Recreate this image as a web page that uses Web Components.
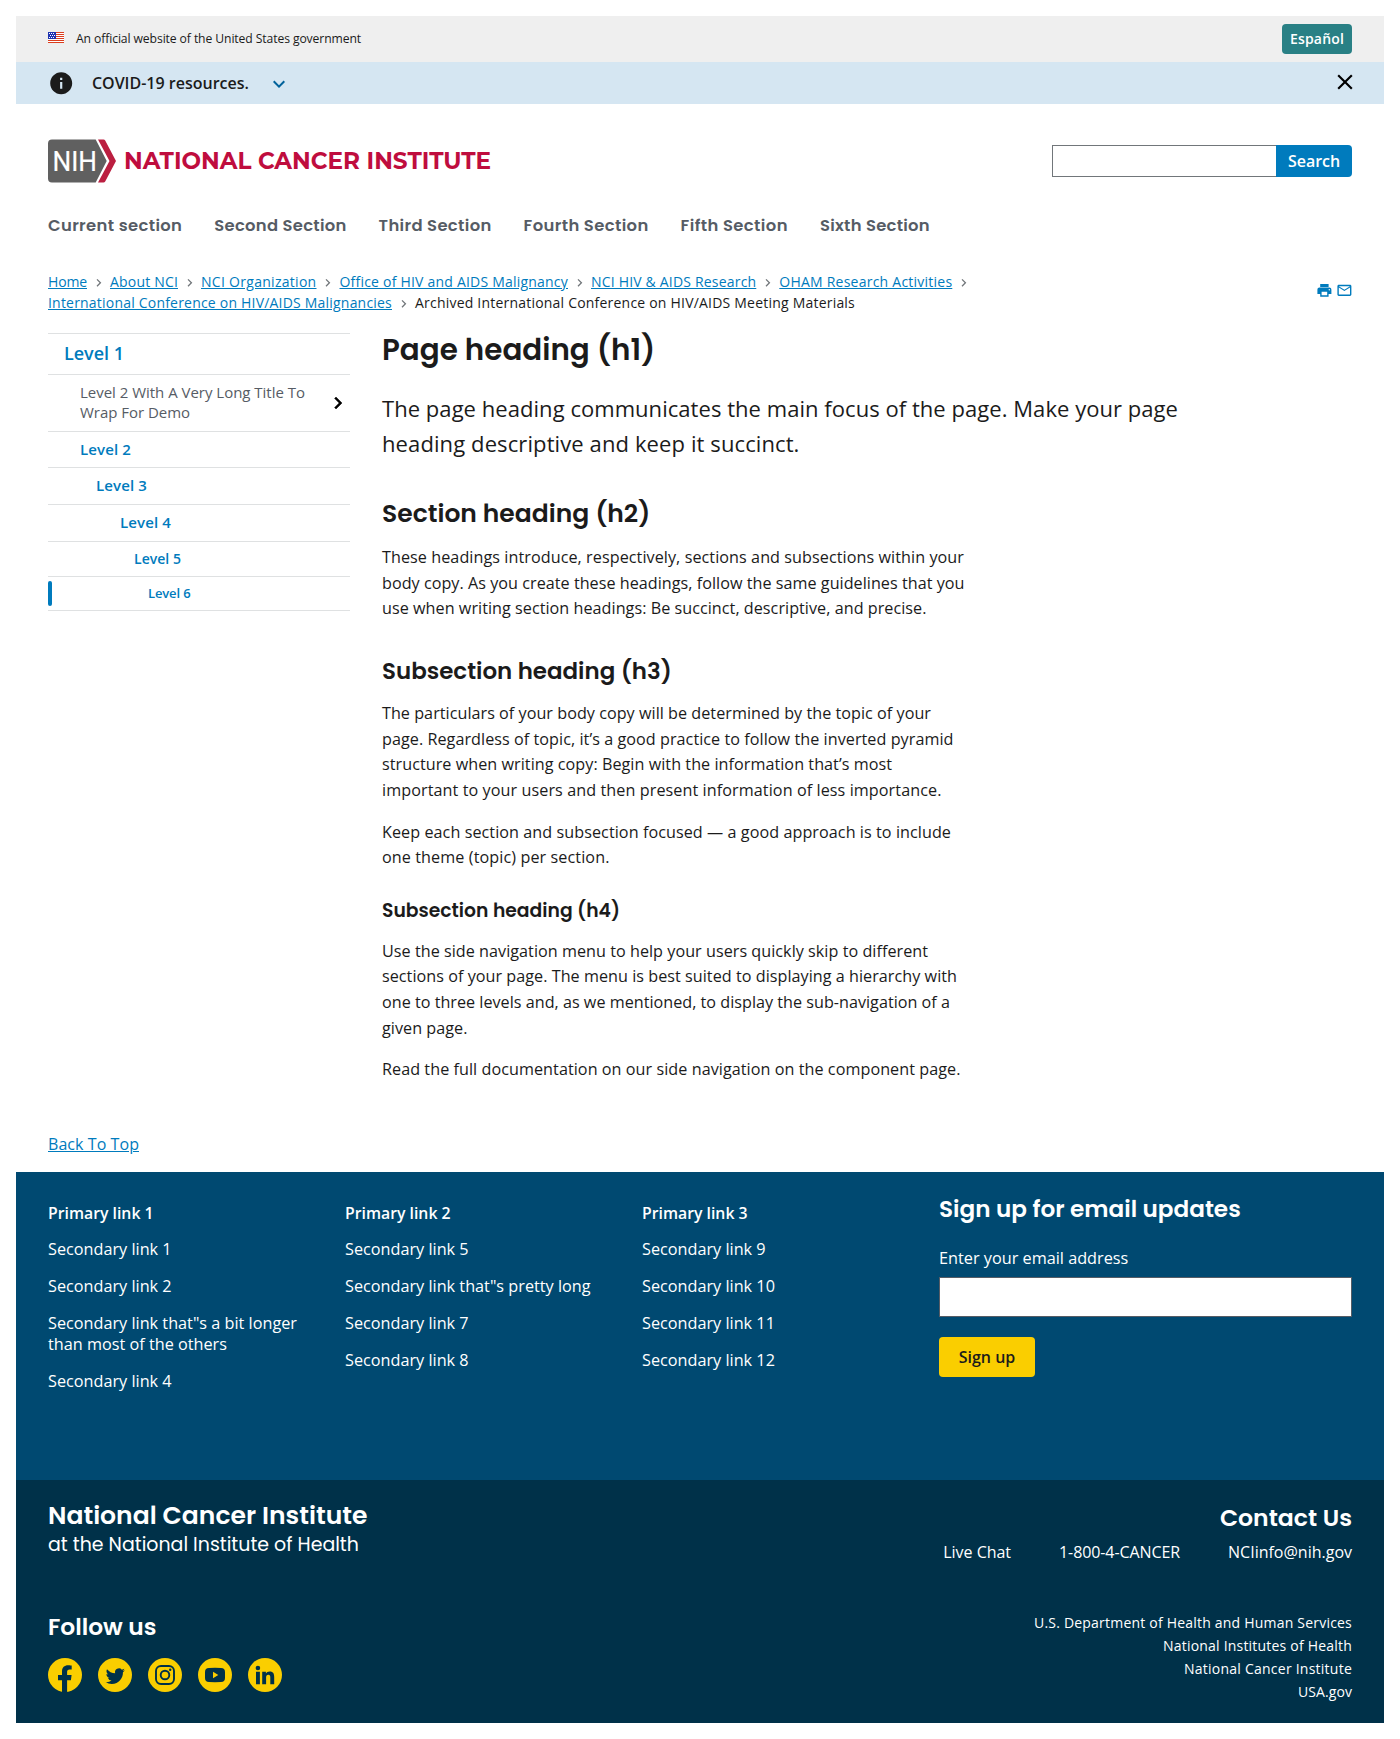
<!DOCTYPE html>
<html lang="en">
<head>
<meta charset="utf-8">
<title>National Cancer Institute</title>
<style>
body{margin:0;padding:16px;background:#fff;color:#1b1b1b;font:16px "Open Sans",sans-serif;
--head:Poppins,Inter,"Open Sans",sans-serif;--link:#007bbd;--line:#dfe1e2;--accent:#face00}
</style>
</head>
<body>
<nci-banner></nci-banner>
<nci-alert>COVID-19 resources.</nci-alert>
<nci-header></nci-header>
<nci-breadcrumb></nci-breadcrumb>
<nci-layout>
  <nci-sidenav slot="side"></nci-sidenav>
  <nci-article></nci-article>
</nci-layout>
<nci-footer></nci-footer>
<script>
const BASE = `*{box-sizing:border-box}a{color:inherit;text-decoration:none}svg{display:block;fill:currentColor;flex:none}
h1,h2,h3,h4,p,ul{margin:0;padding:0}ul{list-style:none}
h1,h2,h3,h4,.head{font-family:var(--head);font-weight:600;white-space:nowrap}
[data-w]{display:inline-block;white-space:nowrap}[data-s]{width:max-content}`;

// data-s: scale the type to a line width; data-w: distribute letter spacing to a line width.
function fit(root){
  root.querySelectorAll('[data-s]').forEach(el => {
    const size = parseFloat(getComputedStyle(el).fontSize);
    const now = el.getBoundingClientRect().width;
    if (now) el.style.fontSize = (size * el.dataset.s / now).toFixed(3) + 'px';
  });
  root.querySelectorAll('[data-w]').forEach(el => {
    const n = el.textContent.length;
    const now = el.getBoundingClientRect().width;
    if (now) el.style.letterSpacing = ((+el.dataset.w - now) / n).toFixed(4) + 'px';
  });
}
function define(name, css, html){
  const t = document.createElement('template');
  t.innerHTML = `<style>${BASE}:host{display:block}${css}</style>${html}`;
  customElements.define(name, class extends HTMLElement{
    constructor(){ super(); this.attachShadow({mode:'open'}).append(t.content.cloneNode(true)); }
    connectedCallback(){ fit(this.shadowRoot); }
  });
}

const ICONS = {
  info:'M12 2C6.48 2 2 6.48 2 12s4.48 10 10 10 10-4.48 10-10S17.52 2 12 2zm1 15h-2v-6h2v6zm0-8h-2V7h2v2z',
  more:'M16.59 8.59 12 13.17 7.41 8.59 6 10l6 6 6-6z',
  close:'M19 6.41 17.59 5 12 10.59 6.41 5 5 6.41 10.59 12 5 17.59 6.41 19 12 13.41 17.59 19 19 17.59 13.41 12z',
  next:'M10 6 8.59 7.41 13.17 12l-4.58 4.59L10 18l6-6z',
  print:'M19 8H5c-1.66 0-3 1.34-3 3v6h4v4h12v-4h4v-6c0-1.66-1.34-3-3-3zm-3 11H8v-5h8v5zm3-7c-.55 0-1-.45-1-1s.45-1 1-1 1 .45 1 1-.45 1-1 1zm-1-9H6v4h12V3z',
  mail:'M22 6c0-1.1-.9-2-2-2H4c-1.1 0-2 .9-2 2v12c0 1.1.9 2 2 2h16c1.1 0 2-.9 2-2V6zm-2 0l-8 5-8-5h16zm0 12H4V8l8 5 8-5v10z'
};
const icon = (n, s) => `<svg class="${n}" width="${s}" height="${s}" viewBox="0 0 24 24"><path d="${ICONS[n]}"/></svg>`;

define('nci-banner', `
:host{height:46px;background:#efefef;padding:0 32px}
.row{display:flex;align-items:center;height:100%}
.flag{margin:0 12px 3px 0}
.t{font-size:12.16px;line-height:16px;flex:none}
.es{margin:0 0 0 auto;width:70px;height:30px;border-radius:4px;background:#298085;color:#fff;font-weight:600;font-size:14px;line-height:30px;text-align:center}`,
`<div class="row"><svg class="flag" width="16" height="11" viewBox="0 0 16 11" shape-rendering="crispEdges">
<path fill="#fff" d="M0 0h16v11H0z"/><path fill="#db3e1f" d="M0 0h16v1H0zM0 2h16v1H0zM0 4h16v1H0zM0 6h16v1H0zM0 8h16v1H0zM0 10h16v1H0z"/><path fill="#1e33b1" d="M0 0h8v7H0z"/>
<path fill="#fff" d="M1 1h1v1H1zM3 1h1v1H3zM5 1h1v1H5zM2 3h1v1H2zM4 3h1v1H4zM6 3h1v1H6zM1 5h1v1H1zM3 5h1v1H3zM5 5h1v1H5z"/></svg>
<span class="t" data-w="285">An official website of the United States government</span>
<a class="es"><span data-w="54">Español</span></a></div>`);

define('nci-alert', `
:host{height:42px;background:#d5e6f2;padding:0 32px}
.row{display:flex;align-items:center;height:100%}
.t{font-weight:600;line-height:22px;margin-left:17.500px}
.more{color:#00629b;margin-left:18.500px;margin-top:1px}
.close{margin:-1.500px -6px 0 auto;color:#000}`,
`<div class="row">${icon('info',26.4)}<span class="t"><slot></slot></span>${icon('more',24)}${icon('close',26)}</div>`);

define('nci-header', `
:host{padding:35px 32px 0}
.top{display:flex;justify-content:space-between;align-items:center;height:44px}
.search{display:flex;height:32px}
.box{width:224px;border:1px solid #71767a;border-right:0;background:#fff}
.btn{width:76px;background:var(--link);color:#fff;font-weight:600;line-height:32px;text-align:center;border-radius:0 4px 4px 0}
nav{display:flex;gap:32px;margin-top:30px;color:#565c65;font-size:16.400px;line-height:24px;height:24px}
nav a{padding-top:.500px}`,
`<div class="top"><svg width="460" height="44" viewBox="0 0 460 44">
<path fill="#606060" d="M4 .5H47.7L58.7 22 47.7 43.5H4A4 4 0 0 1 0 39.500V4.500A4 4 0 0 1 4 .5z"/>
<path fill="#bb1f40" d="M50 .5H55.500Q56.600 .5 57.200 1.500L68 22 57.200 42.500Q56.600 43.500 55.500 43.500H50L61.500 22z"/>
<text x="4.500" y="31.500" font-family="Roboto,sans-serif" font-size="27" font-weight="400" fill="#fff" stroke="#fff" stroke-width=".2" textLength="44.500" lengthAdjust="spacingAndGlyphs">NIH</text>
<text x="76" y="30" font-family="Montserrat,Inter,sans-serif" font-size="23.700" font-weight="700" fill="#bf0d3e" textLength="367" lengthAdjust="spacingAndGlyphs">NATIONAL CANCER INSTITUTE</text></svg>
<div class="search"><div class="box"></div><div class="btn"><span data-w="52">Search</span></div></div></div>
<nav class="head"><a data-w="134.300">Current section</a><a data-w="132.300">Second Section</a><a data-w="113">Third Section</a><a data-w="125">Fourth Section</a><a data-w="107.300">Fifth Section</a><a data-w="110">Sixth Section</a></nav>`);

const crumbs = [['Home',39],['About NCI',68],['NCI Organization',115.500],['Office of HIV and AIDS Malignancy',228.500],['NCI HIV &amp; AIDS Research',165.300],['OHAM Research Activities',173],['International Conference on HIV/AIDS Malignancies',344]];
define('nci-breadcrumb', `
:host{padding:34px 32px 0}
.row{display:flex;justify-content:space-between}
ul{display:flex;flex-wrap:wrap;width:1200px;font-size:14px;line-height:21px}
li{display:flex;align-items:center}
a{color:var(--link);text-decoration:underline}
.next{color:#71767a;margin:2px 4px 0 3.500px}
.tools{display:flex;gap:3.200px;color:var(--link);padding:10.500px 0 0;margin-right:-1px}`,
`<div class="row"><ul>${crumbs.map(c=>`<li><a data-w="${c[1]}">${c[0]}</a>${icon('next',15.500)}</li>`).join('')}<li><span data-w="440">Archived International Conference on HIV/AIDS Meeting Materials</span></li></ul>
<div class="tools">${icon('print',16.800)}${icon('mail',16.800)}</div></div>`);

define('nci-layout', `
:host{padding:20px 32px 0;height:802px}
.row{display:flex;gap:32px}
::slotted([slot=side]){flex:none;width:302px}
main{flex:1}`,
`<div class="row"><slot name="side"></slot><main><slot></slot></main></div>`);

define('nci-sidenav', `
ul{border-bottom:1px solid var(--line)}
li{border-top:1px solid var(--line);display:flex;align-items:center;color:var(--link);font-weight:600;line-height:20px}
a{padding-bottom:2px}
.l1{height:41px;padding-left:16px;font-size:18px}
.wrap{height:57px;padding-left:32px;font-size:15px;font-weight:400;color:#565c65;justify-content:space-between}
.wrap a{padding:0}.wrap span{padding-bottom:2px}
.wrap .next{color:#000;stroke:#000;stroke-width:.5}
.l2{height:36px;padding-left:32px;font-size:15px}
.l3{height:37px;padding-left:48px;font-size:15px}
.l4{height:37px;padding-left:72px;font-size:15px}
.l5{height:35px;padding-left:86px;font-size:14px}
.l5 a{padding-bottom:0}
.l6{height:34px;font-size:13px}
.l6::before{content:"";width:4px;height:25px;border-radius:2px;background:var(--link);margin-right:96px}`,
`<ul><li class="l1"><a data-w="60">Level 1</a></li>
<li class="wrap"><span><a data-w="225">Level 2 With A Very Long Title To</a><br><a data-w="110">Wrap For Demo</a></span>${icon('next',24)}</li>
<li class="l2"><a data-w="51">Level 2</a></li><li class="l3"><a data-w="51">Level 3</a></li><li class="l4"><a data-w="51">Level 4</a></li><li class="l5"><a data-w="47">Level 5</a></li><li class="l6"><a data-w="42.500">Level 6</a></li></ul>`);

const lines = a => a.map(([w,t]) => `<span data-w="${w}">${t}</span>`).join(' <br>');
define('nci-article', `
h1{font-size:29.500px;line-height:33px}
.lead{font-size:22px;line-height:35px;margin-top:25px}
h2{font-size:24px;line-height:30px;margin-top:38px}
h3{font-size:21.500px;line-height:28px;margin-top:34.500px}
h4{font-size:18.400px;line-height:24px;margin-top:27.500px}
p{font-size:16.160px;line-height:25.700px;margin-top:16px}
h3+p{margin-top:16.300px}
p span{vertical-align:top}`,
`<h1 data-s="273.500">Page heading (h1)</h1>
<p class="lead">${lines([[796,'The page heading communicates the main focus of the page. Make your page'],[417.500,'heading descriptive and keep it succinct.']])}</p>
<h2 data-s="268.500">Section heading (h2)</h2>
<p>${lines([[582,'These headings introduce, respectively, sections and subsections within your'],[582.500,'body copy. As you create these headings, follow the same guidelines that you'],[544.500,'use when writing section headings: Be succinct, descriptive, and precise.']])}</p>
<h3 data-s="290">Subsection heading (h3)</h3>
<p>${lines([[549,'The particulars of your body copy will be determined by the topic of your'],[571.500,'page. Regardless of topic, it’s a good practice to follow the inverted pyramid'],[510,'structure when writing copy: Begin with the information that’s most'],[559.500,'important to your users and then present information of less importance.']])}</p>
<p>${lines([[569,'Keep each section and subsection focused — a good approach is to include'],[227.500,'one theme (topic) per section.']])}</p>
<h4 data-s="238">Subsection heading (h4)</h4>
<p>${lines([[546,'Use the side navigation menu to help your users quickly skip to different'],[575,'sections of your page. The menu is best suited to displaying a hierarchy with'],[568,'one to three levels and, as we mentioned, to display the sub-navigation of a'],[85.500,'given page.']])}</p>
<p>${lines([[578.500,'Read the full documentation on our side navigation on the component page.']])}</p>`);

const cols = [['Primary link 1','Secondary link 1','Secondary link 2','Secondary link that"s a bit longer than most of the others','Secondary link 4'],
['Primary link 2','Secondary link 5','Secondary link that"s pretty long','Secondary link 7','Secondary link 8'],
['Primary link 3','Secondary link 9','Secondary link 10','Secondary link 11','Secondary link 12']];
const SOCIAL = [
 '<path d="M14 34.500V22.300H10V17H14V13.600C14 9.500 16.400 7.300 20.100 7.300c1.800 0 3.600.3 3.600.3v4h-2c-2 0-2.600 1.200-2.600 2.500V17h4.500l-.7 5.300h-3.800V34.500z"/>',
 '<path transform="translate(7.700 8.600) scale(.8)" d="M23.953 4.570a10 10 0 01-2.825.775 4.958 4.958 0 002.163-2.723c-.951.555-2.005.959-3.127 1.184a4.920 4.920 0 00-8.384 4.482C7.690 8.095 4.067 6.130 1.640 3.162a4.822 4.822 0 00-.666 2.475c0 1.710.870 3.213 2.188 4.096a4.904 4.904 0 01-2.228-.616v.060a4.923 4.923 0 003.946 4.827 4.996 4.996 0 01-2.212.085 4.936 4.936 0 004.604 3.417 9.867 9.867 0 01-6.102 2.105c-.390 0-.779-.023-1.170-.067a13.995 13.995 0 007.557 2.209c9.053 0 13.998-7.496 13.998-13.985 0-.210 0-.420-.015-.630A9.935 9.935 0 0024 4.590z"/>',
 '<g fill="none" stroke="currentColor" stroke-width="1.900"><rect x="8" y="8" width="18" height="18" rx="5"/><circle cx="17" cy="17" r="4.300"/></g><circle cx="22.200" cy="11.800" r="1.200"/>',
 '<path fill-rule="evenodd" d="M11 10Q17 9.700 23 10Q27 10.200 27 14V20Q27 23.800 23 24Q17 24.300 11 24Q7 23.800 7 20V14Q7 10.200 11 10zM15 13.700V20.300L20.300 17z"/>',
 '<circle cx="9.900" cy="10" r="2.300"/><path d="M8 13.700h3.900V26.300H8zM14.200 13.700h3.700v1.700c.7-1.200 2-2 3.800-2 3.700 0 4.500 2.300 4.500 5.700v7.200h-3.900v-6.500c0-1.600-.1-3-2-3s-2.200 1.400-2.200 3v6.500h-3.900z"/>'];
define('nci-footer', `
:host{color:#fff}
.back{height:49px;width:1304px;margin:-12px 0 0 32px;padding-top:10px;line-height:22px}
.back a{color:var(--link);text-decoration:underline}
.links{height:308px;background:#004971;padding:0 32px;display:grid;grid-template-columns:265px 265px 265px 413px;column-gap:32px}
ul.col{display:flex;flex-direction:column;gap:16px;padding-top:31px;font-size:16.240px;line-height:21px}
.col li:first-child{font-size:15.800px;font-weight:600;line-height:20px;margin-bottom:-.5px}
.sign{padding-top:23px}
.sign h3{font-size:21.700px;line-height:28px}
label{display:block;font-size:16.260px;line-height:21px;margin-top:25px}
.in{height:40px;border:1px solid #565c65;background:#fff;margin-top:8px}
.go{width:96px;height:40px;margin-top:20px;border-radius:4px;background:var(--accent);color:#1b1b1b;font-weight:600;line-height:40px;text-align:center}
.dark{height:243px;background:#003149;padding:0 32px;display:flex;justify-content:space-between}
.l{padding-top:22px}
.l .t{font-size:23.500px;line-height:28px}
.l .s{font-size:19.600px;line-height:26px;font-weight:400;margin-top:2px}
.l h3,.r h3{font-size:21.700px;line-height:28px}
.l h3{margin-top:55px}
.soc{display:flex;gap:16px;margin-top:17px;color:#003149}
.r{padding-top:24px;display:flex;flex-direction:column;align-items:flex-end;text-align:right}
.c{display:flex;gap:48px;justify-content:flex-end;line-height:21px;margin-top:10px}
.ag{font-size:14px;line-height:23px;margin-top:48px}`,
`<div class="back"><a data-w="91">Back To Top</a></div>
<div class="links">${cols.map(c=>`<ul class="col">${c.map(x=>`<li><a>${x}</a></li>`).join('')}</ul>`).join('')}
<div class="sign"><h3 data-s="301.700">Sign up for email updates</h3><label>Enter your email address</label><div class="in"></div><div class="go">Sign up</div></div></div>
<div class="dark"><div class="l"><div class="t head" data-s="319.500">National Cancer Institute</div><div class="s head" data-s="311">at the National Institute of Health</div>
<h3 data-s="108.500">Follow us</h3>
<div class="soc">${SOCIAL.map(s=>`<svg width="34" height="34" viewBox="0 0 34 34"><circle cx="17" cy="17" r="17" fill="#face00"/>${s}</svg>`).join('')}</div></div>
<div class="r"><h3 data-s="132">Contact Us</h3><div class="c"><a data-w="67.800">Live Chat</a><a data-w="121">1-800-4-CANCER</a><a>NCIinfo@nih.gov</a></div>
<ul class="ag"><li><span data-w="318">U.S. Department of Health and Human Services</span></li><li><span data-w="189">National Institutes of Health</span></li><li><span data-w="168">National Cancer Institute</span></li><li><span data-w="54">USA.gov</span></li></ul></div></div>`);
</script>
</body>
</html>
